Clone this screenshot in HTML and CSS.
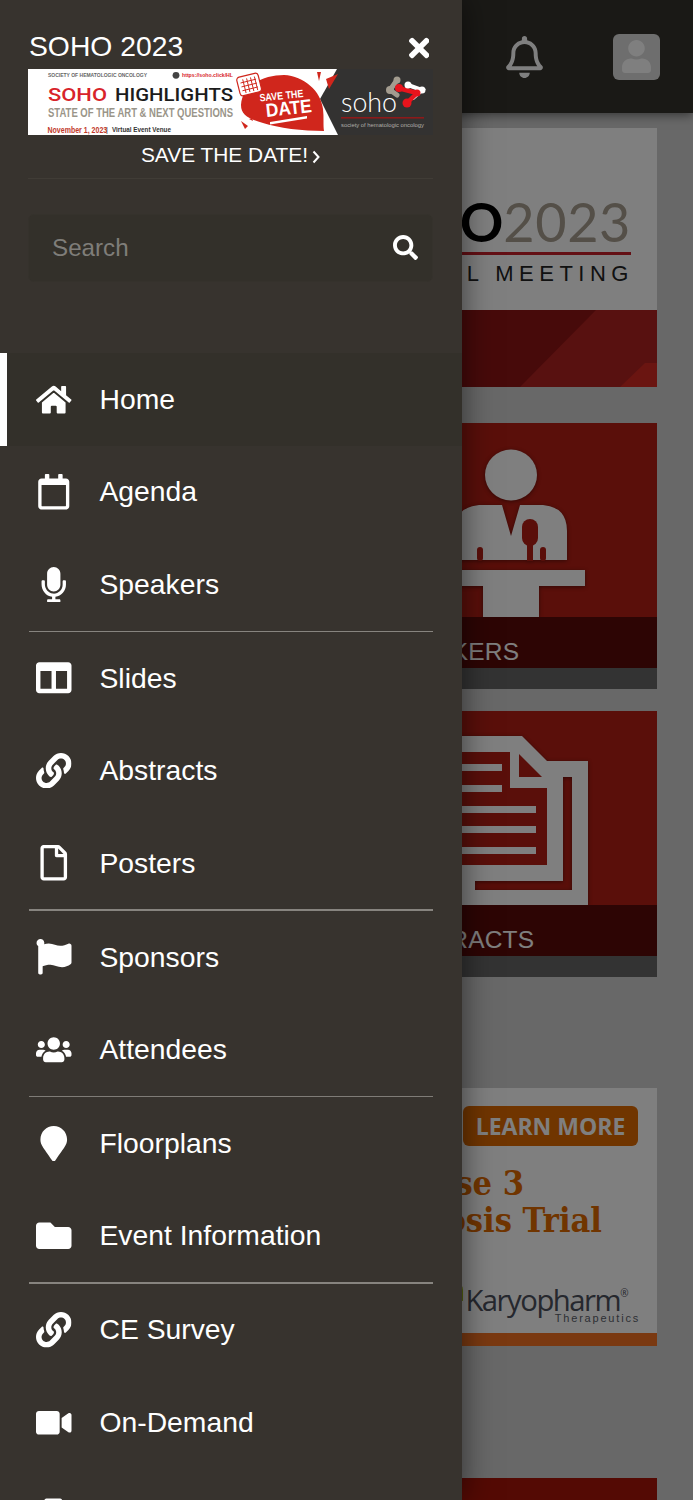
FILE: index.html
```html
<!DOCTYPE html>
<html lang="en">
<head>
    <meta charset="UTF-8">
    <meta name="viewport" content="width=device-width, initial-scale=1.0">
    <title>SOHO 2023</title>
    <link rel="stylesheet" href="styles.css">
</head>
<body>
    <div class="page">
        <header class="topbar">
            <svg class="bell" viewBox="0 0 448 512"><path d="M439.39 362.29c-19.32-20.76-55.47-51.99-55.47-154.29 0-77.7-54.48-139.9-127.94-155.16V32c0-17.67-14.32-32-31.98-32s-31.98 14.33-31.98 32v20.84C118.56 68.1 64.08 130.3 64.08 208c0 102.3-36.15 133.53-55.47 154.29-6 6.45-8.66 14.16-8.61 21.71.11 16.4 12.98 32 32.1 32h383.8c19.12 0 32-15.6 32.1-32 .05-7.55-2.61-15.27-8.61-21.71zM67.53 368c21.22-27.97 44.42-74.33 44.53-159.42 0-.2-.06-.38-.06-.58 0-61.86 50.14-112 112-112s112 50.14 112 112c0 .2-.06.38-.06.58.11 85.1 23.31 131.46 44.53 159.42H67.53zM224 512c35.32 0 63.97-28.65 63.97-64H160.03c0 35.35 28.65 64 63.97 64z"/></svg>
            <div class="avatar">
                <svg viewBox="0 0 448 512"><path d="M224 256c70.7 0 128-57.3 128-128S294.7 0 224 0 96 57.3 96 128s57.3 128 128 128zm89.6 32h-16.7c-22.2 10.2-46.9 16-72.9 16s-50.6-5.8-72.9-16h-16.7C60.2 288 0 348.2 0 422.4V464c0 26.5 21.5 48 48 48h352c26.5 0 48-21.5 48-48v-41.6c0-74.2-60.2-134.4-134.4-134.4z"/></svg>
            </div>
        </header>

        <main class="content">
            <section class="card meeting">
                <div class="meeting-top">
                    <div class="meeting-name"><span class="meeting-soho">SOHO</span><span class="meeting-year">2023</span></div>
                    <div class="meeting-rule"></div>
                    <div class="meeting-sub">ANNUAL MEETING</div>
                </div>
                <svg class="meeting-art" viewBox="0 0 402 77">
                    <rect width="402" height="77" fill="#8f1414"/>
                    <polygon points="265,77 341,0 402,0 402,77" fill="#b02220"/>
                    <polygon points="365,77 390,53 402,53 402,77" fill="#d42a22"/>
                </svg>
            </section>

            <section class="card tile">
                <svg class="tile-art" viewBox="0 0 402 194">
                    <g class="tile-shape">
                        <ellipse cx="256" cy="52" rx="26" ry="25.5" fill="#fff"/>
                        <path d="M247 82L256 113L265 82L288 82Q312 84 312 108L312 137L200 137L200 108Q200 84 224 82Z" fill="#fff"/>
                        <rect x="267" y="96" width="16" height="27" rx="8" fill="#b41e14"/>
                        <rect x="272" y="120" width="6" height="18" fill="#b41e14"/>
                        <rect x="222" y="124" width="6" height="14" rx="3" fill="#b41e14"/>
                        <rect x="285" y="124" width="6" height="14" rx="3" fill="#b41e14"/>
                        <rect x="182" y="147" width="148" height="16" fill="#fff"/>
                        <rect x="228" y="163" width="56" height="31" fill="#fff"/>
                    </g>
                </svg>
                <div class="tile-label">SPEAKERS</div>
                <div class="tile-strip"></div>
            </section>

            <section class="card tile">
                <svg class="tile-art" viewBox="0 0 402 194">
                    <g class="tile-shape">
                        <path fill-rule="evenodd" d="M170 50H333V194H170ZM220 66V179H317V66Z" fill="#fff"/>
                        <polygon points="150,25 267,25 308,66 308,170 150,170" fill="#fff"/>
                        <polygon points="170,41 255,41 255,77 292,77 292,154 170,154" fill="#b41e14"/>
                        <polygon points="264,43 264,66 287,66" fill="#b41e14"/>
                        <rect x="150" y="53" width="97" height="7" fill="#fff"/>
                        <rect x="150" y="74" width="97" height="7" fill="#fff"/>
                        <rect x="150" y="95" width="131" height="7" fill="#fff"/>
                        <rect x="150" y="115" width="131" height="7" fill="#fff"/>
                        <rect x="150" y="136" width="131" height="7" fill="#fff"/>
                    </g>
                </svg>
                <div class="tile-label">ABSTRACTS</div>
                <div class="tile-strip"></div>
            </section>

            <section class="card ad">
                <div class="ad-body">
                    <div class="ad-button">LEARN MORE</div>
                    <div class="ad-head ad-head-short">Phase 3</div>
                    <div class="ad-head ad-head-long">Myelofibrosis Trial</div>
                    <div class="ad-logo">
                        <span class="ad-leaf"></span>
                        <div class="ad-brand">
                            <div class="ad-name">Karyopharm<sup>®</sup></div>
                            <div class="ad-sub">Therapeutics</div>
                        </div>
                    </div>
                </div>
                <div class="ad-strip"></div>
            </section>

            <section class="card last"></section>
        </main>
    </div>

    <div class="overlay"></div>

    <nav class="drawer">
        <div class="drawer-head">
            <div class="drawer-title">
                <span>SOHO 2023</span>
                <svg class="close" viewBox="0 0 352 512"><path d="M242.72 256l100.07-100.07c12.28-12.28 12.28-32.19 0-44.48l-22.24-22.24c-12.28-12.28-32.19-12.28-44.48 0L176 189.28 75.93 89.21c-12.28-12.28-32.19-12.28-44.48 0L9.21 111.45c-12.28 12.28-12.28 32.19 0 44.48L109.28 256 9.21 356.07c-12.28 12.28-12.28 32.19 0 44.48l22.24 22.24c12.28 12.28 32.2 12.28 44.48 0L176 322.72l100.07 100.07c12.28 12.28 32.2 12.28 44.48 0l22.24-22.24c12.28-12.28 12.28-32.19 0-44.48L242.72 256z"/></svg>
            </div>

            <svg class="banner" viewBox="0 0 405 66">
                <rect width="405" height="66" fill="#fff"/>
                <text x="20" y="8" font-size="5.6" font-weight="700" fill="#666" textLength="99" lengthAdjust="spacingAndGlyphs">SOCIETY OF HEMATOLOGIC ONCOLOGY</text>
                <circle cx="148" cy="6.3" r="3.4" fill="#444"/>
                <text x="154" y="8" font-size="5" font-weight="700" fill="#d8232a" textLength="51" lengthAdjust="spacingAndGlyphs">https://soho.click/HL</text>
                <text class="banner-head" x="20" y="31.8" font-size="18" fill="#d8232a" textLength="59" lengthAdjust="spacingAndGlyphs">SOHO</text>
                <text class="banner-head" x="87" y="31.8" font-size="18" fill="#1c1c1c" textLength="118" lengthAdjust="spacingAndGlyphs">HIGHLIGHTS</text>
                <text x="20" y="48" font-size="13" font-weight="700" fill="#9a9589" textLength="185" lengthAdjust="spacingAndGlyphs">STATE OF THE ART &amp; NEXT QUESTIONS</text>
                <text transform="translate(19.5 63.5) scale(.74 1)" font-size="9.5" font-weight="700" fill="#c23a2c">November 1, 2023</text>
                <text x="78" y="63" font-size="7" fill="#222">|</text>
                <text x="84" y="63" font-size="6.5" font-weight="700" fill="#333" textLength="59" lengthAdjust="spacingAndGlyphs">Virtual Event Venue</text>

                <polygon points="309,0 405,0 405,66 310,66 292,30" fill="#333231"/>
                <path d="M213 36C214 16 236 6 256 6C276 7 293 22 295 40C296 48 295 56 296 62C275 62 250 59 235 54C221 50 213 46 213 36Z" fill="#d0261c"/>
                <polygon points="301,20 310,5 298,10" fill="#d0261c"/>
                <polygon points="289,3 291,12 293,3" fill="#d0261c"/>
                <polygon points="213,52 217,60 220,57" fill="#d0261c"/>
                <polygon points="221,50 225,52 224,49" fill="#d0261c"/>
                <g transform="rotate(-14 221 15)">
                    <rect x="210" y="6" width="22" height="19" rx="3" fill="#fff" stroke="#d0261c" stroke-width="1.2"/>
                    <path d="M213 12H229M213 16H229M213 20H229M216 9V23M220 9V23M224 9V23M228 9V23" stroke="#d0261c" stroke-width=".9"/>
                </g>
                <g transform="rotate(-6 256 32)" fill="#fff" font-weight="700" text-anchor="middle">
                    <text x="254" y="30" font-size="10.5" textLength="44" lengthAdjust="spacingAndGlyphs">SAVE THE</text>
                    <text x="260" y="46" font-size="19" textLength="46" lengthAdjust="spacingAndGlyphs">DATE</text>
                </g>
                <polygon points="242,53 279,47 279,49.5 242,55.5" fill="#fff"/>

                <text x="313" y="42.5" font-size="28" font-weight="300" fill="#fff" textLength="56" lengthAdjust="spacingAndGlyphs" class="banner-soho">soho</text>
                <g fill="none" stroke-linecap="round">
                    <path d="M362 21L369 11M362 21L369 26" stroke="#a39c8f" stroke-width="5"/>
                    <path d="M380 16L394 21L385 29" stroke="#fff" stroke-width="4"/>
                    <path d="M370 19L389 24L379 34" stroke="#e8141c" stroke-width="4.5"/>
                </g>
                <circle cx="362" cy="21" r="4" fill="#a39c8f"/>
                <circle cx="369" cy="11" r="3.5" fill="#a39c8f"/>
                <circle cx="394" cy="21" r="3.5" fill="#fff"/>
                <circle cx="380" cy="16" r="3.5" fill="#fff"/>
                <circle cx="371" cy="19" r="4" fill="#e8141c"/>
                <circle cx="389" cy="24" r="3.5" fill="#e8141c"/>
                <circle cx="379" cy="34" r="4.5" fill="#e8141c"/>
                <rect x="313" y="48" width="83" height="1.6" fill="#8c1a1a"/>
                <text x="313" y="57.5" font-size="5.6" fill="#b0aeaa" textLength="83" lengthAdjust="spacingAndGlyphs">society of hematologic oncology</text>
            </svg>

            <a class="save-date">SAVE THE DATE!<svg viewBox="0 0 8 14"><path d="M1.5 1.5L6.5 7L1.5 12.5" fill="none" stroke="#fff" stroke-width="2"/></svg></a>
            <div class="head-rule"></div>

            <div class="search">
                <input type="text" placeholder="Search">
                <svg viewBox="0 0 512 512"><path d="M505 442.7L405.3 343c-4.5-4.5-10.6-7-17-7H372c27.6-35.3 44-79.7 44-128C416 93.1 322.9 0 208 0S0 93.1 0 208s93.1 208 208 208c48.3 0 92.7-16.4 128-44v16.3c0 6.4 2.5 12.5 7 17l99.7 99.7c9.4 9.4 24.6 9.4 33.9 0l28.3-28.3c9.4-9.4 9.4-24.6.1-34zM208 336c-70.7 0-128-57.2-128-128 0-70.7 57.2-128 128-128 70.7 0 128 57.2 128 128 0 70.7-57.2 128-128 128z"/></svg>
            </div>
        </div>

        <svg class="sprite" width="0" height="0">
            <symbol id="i-link" viewBox="0 0 512 512"><path d="M326.612 185.391c59.747 59.809 58.927 155.698.36 214.59-.11.12-.24.25-.36.37l-67.2 67.2c-59.27 59.27-155.699 59.262-214.96 0-59.27-59.26-59.27-155.7 0-214.96l37.106-37.106c9.84-9.84 26.786-3.3 27.294 10.606.648 17.722 3.826 35.527 9.69 52.721 1.986 5.822.567 12.262-3.783 16.612l-13.087 13.087c-28.026 28.026-28.905 73.66-1.155 101.96 28.024 28.579 74.086 28.749 102.325.51l67.2-67.19c28.191-28.191 28.073-73.757 0-101.83-3.701-3.694-7.429-6.564-10.341-8.569a16.037 16.037 0 0 1-6.947-12.606c-.396-10.567 3.348-21.456 11.698-29.806l21.054-21.055c5.521-5.521 14.182-6.199 20.584-1.731a152.482 152.482 0 0 1 20.522 17.197zM467.547 44.449c-59.261-59.262-155.69-59.27-214.96 0l-67.2 67.2c-.12.12-.25.25-.36.37-58.566 58.892-59.387 154.781.36 214.59a152.454 152.454 0 0 0 20.521 17.196c6.402 4.468 15.064 3.789 20.584-1.731l21.054-21.055c8.35-8.35 12.094-19.239 11.698-29.806a16.037 16.037 0 0 0-6.947-12.606c-2.912-2.005-6.64-4.875-10.341-8.569-28.073-28.073-28.191-73.639 0-101.83l67.2-67.19c28.239-28.239 74.3-28.069 102.325.51 27.75 28.3 26.872 73.934-1.155 101.96l-13.087 13.087c-4.35 4.35-5.769 10.79-3.783 16.612 5.864 17.194 9.042 34.999 9.69 52.721.509 13.906 17.454 20.446 27.294 10.606l37.106-37.106c59.271-59.259 59.271-155.699.001-214.959z"/></symbol>
        </svg>

        <ul class="menu">
            <li class="item active">
                <svg class="icon" viewBox="0 0 576 512"><path d="M280.37 148.26L96 300.11V464a16 16 0 0 0 16 16l112.06-.29a16 16 0 0 0 15.92-16V368a16 16 0 0 1 16-16h64a16 16 0 0 1 16 16v95.64a16 16 0 0 0 16 16.05L464 480a16 16 0 0 0 16-16V300L295.67 148.26a12.19 12.19 0 0 0-15.3 0zM571.6 251.47L488 182.56V44.05a12 12 0 0 0-12-12h-56a12 12 0 0 0-12 12v72.61L318.47 43a48 48 0 0 0-61 0L4.34 251.47a12 12 0 0 0-1.6 16.9l25.5 31A12 12 0 0 0 45.15 301l235.22-193.74a12.19 12.19 0 0 1 15.3 0L530.9 301a12 12 0 0 0 16.9-1.6l25.5-31a12 12 0 0 0-1.7-16.93z"/></svg>
                <span>Home</span>
            </li>
            <li class="item">
                <svg class="icon" viewBox="0 0 448 512"><path d="M400 64h-48V12c0-6.6-5.4-12-12-12h-40c-6.6 0-12 5.4-12 12v52H160V12c0-6.6-5.4-12-12-12h-40c-6.6 0-12 5.4-12 12v52H48C21.5 64 0 85.5 0 112v352c0 26.5 21.5 48 48 48h352c26.5 0 48-21.5 48-48V112c0-26.5-21.5-48-48-48zm-6 400H54c-3.3 0-6-2.7-6-6V160h352v298c0 3.3-2.7 6-6 6z"/></svg>
                <span>Agenda</span>
            </li>
            <li class="item">
                <svg class="icon" viewBox="0 0 352 512"><path d="M176 352c53.02 0 96-42.98 96-96V96c0-53.02-42.98-96-96-96S80 42.98 80 96v160c0 53.02 42.98 96 96 96zm160-160h-16c-8.84 0-16 7.16-16 16v48c0 74.8-64.49 134.82-140.79 127.38C96.71 376.89 48 317.11 48 250.3V208c0-8.84-7.16-16-16-16H16c-8.84 0-16 7.16-16 16v40.16c0 89.64 63.97 169.55 152 181.69V464H96c-8.84 0-16 7.16-16 16v16c0 8.84 7.16 16 16 16h160c8.84 0 16-7.16 16-16v-16c0-8.84-7.16-16-16-16h-56v-33.77C285.71 418.47 352 344.9 352 256v-48c0-8.84-7.16-16-16-16z"/></svg>
                <span>Speakers</span>
            </li>
            <li class="divider"></li>
            <li class="item">
                <svg class="icon" viewBox="0 0 512 512"><path d="M464 32H48C21.49 32 0 53.49 0 80v352c0 26.51 21.49 48 48 48h416c26.51 0 48-21.49 48-48V80c0-26.51-21.49-48-48-48zM224 416H64V160h160v256zm224 0H288V160h160v256z"/></svg>
                <span>Slides</span>
            </li>
            <li class="item">
                <svg class="icon"><use href="#i-link"/></svg>
                <span>Abstracts</span>
            </li>
            <li class="item">
                <svg class="icon" viewBox="0 0 384 512"><path d="M369.9 97.9L286 14C277 5 264.8-.1 252.1-.1H48C21.5 0 0 21.5 0 48v416c0 26.5 21.5 48 48 48h288c26.5 0 48-21.5 48-48V131.9c0-12.7-5.1-25-14.1-34zM332.1 128H256V51.9l76.1 76.1zM48 464V48h160v104c0 13.3 10.7 24 24 24h104v288H48z"/></svg>
                <span>Posters</span>
            </li>
            <li class="divider"></li>
            <li class="item">
                <svg class="icon" viewBox="0 0 512 512"><path d="M349.565 98.783C295.978 98.783 251.721 64 184.348 64c-24.955 0-47.309 4.384-68.045 12.013a55.947 55.947 0 0 0 3.586-23.562C118.117 24.015 94.806 1.206 66.338.048 34.345-1.254 8 24.296 8 56c0 19.026 9.497 35.825 24 45.945V488c0 13.255 10.745 24 24 24h16c13.255 0 24-10.745 24-24v-94.4c28.311-12.064 63.582-22.122 114.435-22.122 53.588 0 97.844 34.783 165.217 34.783 48.169 0 86.667-16.294 122.505-40.858C506.84 359.452 512 349.571 512 339.045v-243.1c0-23.393-24.269-38.87-45.485-29.016-34.338 15.948-76.454 31.854-116.95 31.854z"/></svg>
                <span>Sponsors</span>
            </li>
            <li class="item">
                <svg class="icon" viewBox="0 0 640 512"><path d="M96 224c35.3 0 64-28.7 64-64s-28.7-64-64-64-64 28.7-64 64 28.7 64 64 64zm448 0c35.3 0 64-28.7 64-64s-28.7-64-64-64-64 28.7-64 64 28.7 64 64 64zm32 32h-64c-17.6 0-33.5 7.1-45.1 18.6 40.3 22.1 68.9 62 75.1 109.4h66c17.7 0 32-14.3 32-32v-32c0-35.3-28.7-64-64-64zm-256 0c61.9 0 112-50.1 112-112S381.9 32 320 32 208 82.1 208 144s50.1 112 112 112zm76.8 32h-8.3c-20.8 10-43.9 16-68.5 16s-47.6-6-68.5-16h-8.3C179.6 288 128 339.6 128 403.2V432c0 26.5 21.5 48 48 48h288c26.5 0 48-21.5 48-48v-28.8c0-63.6-51.6-115.2-115.2-115.2zm-223.7-13.4C161.5 263.1 145.6 256 128 256H64c-35.3 0-64 28.7-64 64v32c0 17.7 14.3 32 32 32h65.9c6.3-47.4 34.9-87.3 75.2-109.4z"/></svg>
                <span>Attendees</span>
            </li>
            <li class="divider thin"></li>
            <li class="item">
                <svg class="icon" viewBox="0 0 384 512"><path d="M172.268 501.67C26.97 291.031 0 269.413 0 192 0 85.961 85.961 0 192 0s192 85.961 192 192c0 77.413-26.97 99.031-172.268 309.67-9.535 13.774-29.93 13.773-39.464 0z"/></svg>
                <span>Floorplans</span>
            </li>
            <li class="item">
                <svg class="icon" viewBox="0 0 512 512"><path d="M464 128H272l-64-64H48C21.49 64 0 85.49 0 112v288c0 26.51 21.49 48 48 48h416c26.51 0 48-21.49 48-48V176c0-26.51-21.49-48-48-48z"/></svg>
                <span>Event Information</span>
            </li>
            <li class="divider"></li>
            <li class="item">
                <svg class="icon"><use href="#i-link"/></svg>
                <span>CE Survey</span>
            </li>
            <li class="item">
                <svg class="icon" viewBox="0 0 576 512"><path d="M336.2 64H47.8C21.4 64 0 85.4 0 111.8v288.4C0 426.6 21.4 448 47.8 448h288.4c26.4 0 47.8-21.4 47.8-47.8V111.8c0-26.4-21.4-47.8-47.8-47.8zm189.4 37.7L416 177.3v157.4l109.6 75.5c21.2 14.6 50.4-.3 50.4-25.8V127.5c0-25.4-29.1-40.4-50.4-25.8z"/></svg>
                <span>On-Demand</span>
            </li>
            <li class="item">
                <svg class="icon" viewBox="0 0 36 36"><rect x="8.5" y="1.5" width="18" height="33" rx="2"/></svg>
            </li>
        </ul>
    </nav>
</body>
</html>
```

FILE: styles.css
```css
* {
    box-sizing: border-box;
}
html, body {
    margin: 0;
    height: 100%;
    overflow: hidden;
}
body {
    position: relative;
    font-family: "Liberation Sans", Arial, sans-serif;
    background-color: #d0d0d0;
}

/* page behind the drawer */
.page {
    display: flex;
    flex-direction: column;
    height: 100%;
    overflow: hidden;
}
.topbar {
    display: flex;
    align-items: center;
    justify-content: flex-end;
    flex-shrink: 0;
    height: 113px;
    padding-right: 33px;
    background-color: #34322c;
    box-shadow: 0 2px 10px rgba(0, 0, 0, 0.5);
}
.bell {
    width: 37px;
    height: 42px;
    margin-right: 70px;
    fill: #fff;
}
.avatar {
    display: flex;
    align-items: center;
    justify-content: center;
    width: 47px;
    height: 46px;
    border-radius: 6px;
    background-color: #dcdcdc;
}
.avatar svg {
    width: 29px;
    height: 33px;
    fill: #fff;
}
.content {
    display: flex;
    flex-direction: column;
    align-items: flex-end;
    padding: 15px 36px 0 0;
}
.card {
    flex-shrink: 0;
    width: 402px;
    overflow: hidden;
}

.meeting {
    height: 259px;
    margin-bottom: 36px;
    background-color: #fff;
}
.meeting-top {
    display: flex;
    flex-direction: column;
    align-items: flex-end;
    height: 182px;
    padding: 70px 26px 0 0;
}
.meeting-name {
    font-family: Lato, sans-serif;
    font-size: 54px;
    line-height: 48px;
    white-space: nowrap;
}
.meeting-soho {
    font-weight: 700;
    color: #000;
}
.meeting-year {
    letter-spacing: 0.6px;
    color: #a89f90;
}
.meeting-rule {
    width: 320px;
    height: 3px;
    margin-top: 6px;
    background-color: #c8202a;
}
.meeting-sub {
    margin-top: 7px;
    margin-right: -3px;
    font-size: 22px;
    line-height: 24px;
    letter-spacing: 5.5px;
    color: #222;
    white-space: nowrap;
}
.meeting-art {
    display: block;
    width: 402px;
    height: 77px;
}

.tile {
    height: 266px;
    margin-bottom: 22px;
    background-color: #b41e14;
}
.tile-art {
    display: block;
    width: 402px;
    height: 194px;
}
.tile-shape {
    filter: drop-shadow(0 1px 2px rgba(0, 0, 0, 0.45));
}
.tile-label {
    height: 51px;
    padding-left: 130.5px;
    font-size: 24.5px;
    line-height: 70px;
    letter-spacing: 0.2px;
    color: #fff;
    background-color: #5a0a08;
}
.tile-strip {
    height: 21px;
    background-color: #666;
}

.ad {
    display: flex;
    flex-direction: column;
    height: 258px;
    margin-top: 89px;
    margin-bottom: 132px;
    background-color: #fff;
}
.ad-body {
    display: flex;
    flex-direction: column;
    align-items: flex-end;
    flex: 1;
    padding: 18px 19px 0 0;
}
.ad-button {
    width: 175px;
    height: 40px;
    border-radius: 6px;
    font-family: "Open Sans", sans-serif;
    font-size: 23px;
    font-weight: 700;
    line-height: 40px;
    text-align: center;
    color: #fff;
    background-color: #e06a00;
}
.ad-head {
    font-family: "DejaVu Serif Condensed", "DejaVu Serif", serif;
    font-size: 34px;
    font-weight: 700;
    line-height: 37px;
    white-space: nowrap;
    color: #e06a00;
}
.ad-head-short {
    margin: 19px 114px 0 0;
}
.ad-head-long {
    margin-right: 36px;
}
.ad-logo {
    display: flex;
    align-items: flex-start;
    margin-top: 50px;
}
.ad-leaf {
    width: 8px;
    height: 19px;
    margin: -7px 2px 0 0;
    border-radius: 0 8px 0 8px;
    background-color: #a4c41c;
}
.ad-name {
    margin-right: 11px;
    font-family: "Open Sans", sans-serif;
    font-size: 29.3px;
    line-height: 22px;
    letter-spacing: -1.5px;
    color: #4c505c;
}
.ad-name sup {
    font-size: 10px;
    line-height: 0;
    vertical-align: 14px;
}
.ad-sub {
    margin-top: 1px;
    margin-right: -2px;
    font-size: 11px;
    line-height: 12px;
    letter-spacing: 1.8px;
    text-align: right;
    color: #5a5e6a;
}
.ad-strip {
    height: 13px;
    background-color: #f57222;
}
.last {
    height: 120px;
    background-color: #a81408;
}

.overlay {
    position: absolute;
    top: 0;
    left: 0;
    width: 100%;
    height: 100%;
    background-color: rgba(0, 0, 0, 0.5);
}

/* side drawer */
.drawer {
    position: absolute;
    top: 0;
    left: 0;
    width: 462px;
    height: 100%;
    overflow: hidden;
    color: #fff;
    background-color: #37332e;
    box-shadow: 0 0 30px rgba(0, 0, 0, 0.55);
}
.drawer-head {
    display: flex;
    flex-direction: column;
    height: 353px;
    padding: 27.5px 29px 0 28px;
}
.drawer-title {
    display: flex;
    align-items: center;
    justify-content: space-between;
    height: 36px;
    padding-left: 1px;
    font-size: 28.3px;
    line-height: 36px;
}
.close {
    width: 20.5px;
    height: 30px;
    margin: 4px 4px 0 0;
    fill: #fff;
}
.banner {
    display: block;
    width: 405px;
    height: 66px;
    margin-top: 5.5px;
}
.banner text {
    font-family: "Liberation Sans", Arial, sans-serif;
}
.banner .banner-head {
    font-family: Roboto, sans-serif;
    font-weight: 500;
}
.banner .banner-soho {
    font-family: Lato, sans-serif;
}
.save-date {
    display: flex;
    align-items: center;
    justify-content: center;
    gap: 4px;
    height: 30px;
    margin-top: 5px;
    font-size: 20.9px;
}
.save-date svg {
    width: 8px;
    height: 14px;
    margin-top: 3px;
}
.head-rule {
    height: 1px;
    margin-top: 8px;
    background-color: #403c36;
}
.search {
    display: flex;
    align-items: center;
    height: 67.5px;
    margin-top: 35px;
    padding: 0 14px 0 23px;
    border: 1px solid #35322c;
    border-radius: 6px;
    background-color: #33302a;
}
.search input {
    flex: 1;
    min-width: 0;
    padding: 0;
    border: none;
    outline: none;
    font-family: inherit;
    font-size: 24.2px;
    color: #fff;
    background: transparent;
}
.search input::placeholder {
    color: #7f7d79;
    opacity: 1;
}
.search svg {
    width: 25px;
    height: 25px;
    fill: #fff;
}
.sprite {
    position: absolute;
}

.menu {
    margin: 0;
    padding: 0;
    list-style: none;
}
.item {
    display: flex;
    align-items: center;
    gap: 28px;
    height: 92.5px;
    padding-left: 36px;
    font-size: 28.3px;
}
.item.active {
    border-left: 7px solid #fff;
    padding-left: 29px;
    background-color: #33302a;
}
.icon {
    flex-shrink: 0;
    width: 35.5px;
    height: 35.5px;
    fill: #fff;
}
.divider {
    height: 1.4px;
    margin: 0 29px 0 28.5px;
    background-color: #87847f;
}
.divider.thin {
    opacity: 0.9;
}
```
